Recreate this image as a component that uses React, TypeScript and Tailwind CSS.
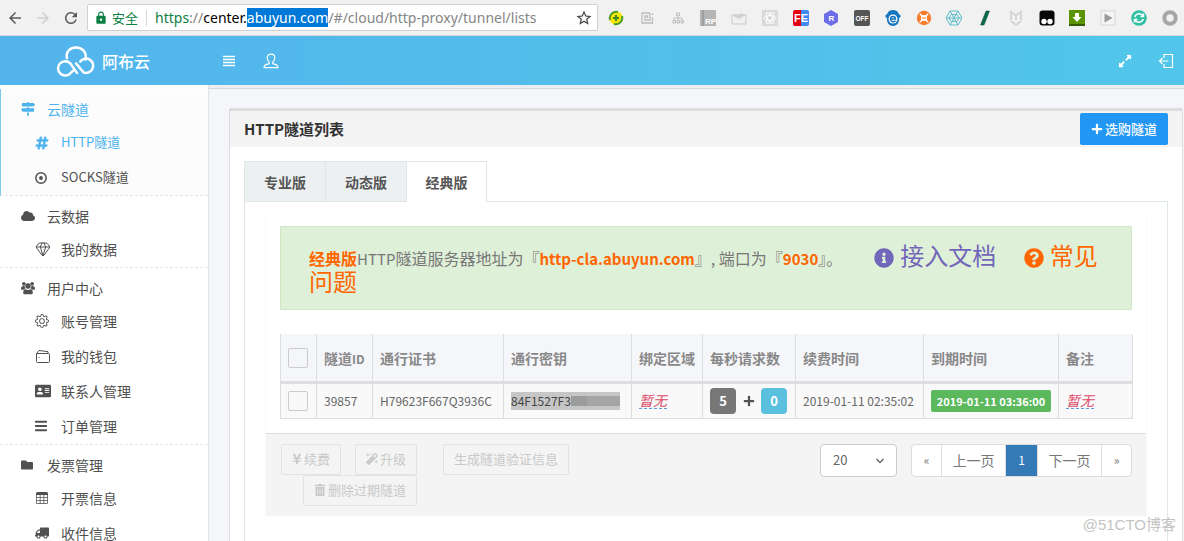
import React from 'react';
import {
  FaAddressCard,
  FaBars,
  FaCloud,
  FaExpandAlt,
  FaFolder,
  FaHashtag,
  FaInfoCircle,
  FaMagic,
  FaMapSigns,
  FaPlus,
  FaQuestionCircle,
  FaTrashAlt,
  FaTruck,
  FaYenSign } from
'react-icons/fa';
import { BsGear, BsTable } from 'react-icons/bs';
import { Gem } from 'lucide-react';
import {
  MdArrowBack,
  MdArrowForward,
  MdLock,
  MdRefresh,
  MdStarBorder } from
'react-icons/md';

const WalletIcon = ({ className }: {className?: string;}) =>
<svg viewBox="0 0 16 16" className={className} fill="none" stroke="currentColor">
    <path d="M1.500 5.500h12a1 1 0 0 1 1 1v7a1 1 0 0 1-1 1h-11a1 1 0 0 1-1-1z" />
    <path d="M1.500 5.500 4 2.500l9 1.200v1.800" />
    <path d="M3.500 9.500h1" />
  </svg>;

const UsersIcon = ({ className }: {className?: string;}) =>
<svg viewBox="0 0 16 16" className={className} fill="currentColor">
    <circle cx="3.300" cy="3.200" r="2.100" />
    <circle cx="12.700" cy="3.200" r="2.100" />
    <circle cx="8" cy="5.800" r="3.100" />
    <path d="M4.300 6C1.800 5.400 0 6.200 0 8.800c0 .8.600 1.200 1.400 1.200h2.100c.6-.8 1-1.200 1.700-1.300C4.500 7.900 4.200 7 4.300 6zM11.700 6c2.500-.6 4.300.2 4.300 2.800 0 .8-.6 1.200-1.400 1.200h-2.100c-.6-.8-1-1.200-1.700-1.300.7-.8 1-1.700.9-2.700z" />
    <path d="M5.300 9.300c1.700 1.200 3.700 1.200 5.400 0 2 0 2.800 1.900 2.800 4 0 1.200-.9 1.900-2 1.900h-7c-1.100 0-2-.7-2-1.900 0-2.100.8-4 2.800-4z" />
  </svg>;

const TargetIcon = ({ className }: {className?: string;}) =>
<svg viewBox="0 0 12 12" className={className}>
    <circle cx="6" cy="6" r="5.200" fill="none" stroke="currentColor" strokeWidth="1.500" />
    <circle cx="6" cy="6" r="1.900" fill="currentColor" />
  </svg>;

const ListIcon = () =>
<svg viewBox="0 0 12 12" className="h-3 w-3" stroke="currentColor" strokeWidth="1.700">
    <path d="M0 1.500h12M0 4.500h12M0 7.500h12M0 10.500h12" />
  </svg>;

const UserIcon = () =>
<svg viewBox="0 0 16 16" className="h-4 w-4" fill="none" stroke="currentColor" strokeWidth="1.200">
    <path d="M6.200 9.200C4.800 8 4.200 6.400 4.200 4.600 4.200 2.500 5.800 1.200 8 1.200s3.800 1.300 3.800 3.400c0 1.800-.6 3.400-2 4.600v1.400c1.800.7 3.800 1 4.600 2.100.3.500.5 1.200.5 1.900H1.100c0-.7.2-1.400.5-1.900.8-1.100 2.800-1.400 4.600-2.100z" />
  </svg>;

const LogoutIcon = () =>
<svg viewBox="0 0 16 16" className="h-4 w-4" fill="none" stroke="currentColor" strokeWidth="1.200">
    <path d="M6 5V1.500h8.500v13H6V11" />
    <path d="M10.500 8H1.500M4.500 5 1.500 8l3 3" />
  </svg>;

const LogoIcon = () =>
<svg viewBox="0 0 42 32" className="h-8 w-10" fill="none" stroke="white" strokeWidth="2.600" strokeLinecap="round">
    <path d="M11.500 13C10 6.500 14.500 1.800 21 1.800S32.500 6.500 31 14.500" />
    <path d="M22 28.500 15 18.500A7.500 7.500 0 1 0 15.500 28.500L18 26" />
    <path d="M21 18.500l8 9.500a7.500 7.500 0 1 0-3.500-11.500" />
  </svg>;

interface MenuItem {
  label: string;
  icon: React.ReactNode;
  active?: boolean;
  latin?: boolean;
}

const menu: {label: string;icon: React.ReactNode;active?: boolean;items: MenuItem[];}[] = [
{
  label: '云隧道',
  icon: <FaMapSigns className="h-3.5 w-3.5" />,
  active: true,
  items: [
  { label: 'HTTP隧道', icon: <FaHashtag className="h-3.5 w-3.5 stroke-current stroke-[24px]" />, active: true, latin: true },
  { label: 'SOCKS隧道', icon: <TargetIcon className="h-3 w-3" />, latin: true }]

},
{
  label: '云数据',
  icon: <FaCloud className="h-3.5 w-3.5" />,
  items: [{ label: '我的数据', icon: <Gem className="h-4 w-4" strokeWidth={1.5} /> }]
},
{
  label: '用户中心',
  icon: <UsersIcon className="h-3.5 w-3.5" />,
  items: [
  { label: '账号管理', icon: <BsGear className="h-3.5 w-3.5" /> },
  { label: '我的钱包', icon: <WalletIcon className="h-4 w-4" /> },
  { label: '联系人管理', icon: <FaAddressCard className="h-4 w-4" /> },
  { label: '订单管理', icon: <FaBars className="h-3.5 w-3" /> }]

},
{
  label: '发票管理',
  icon: <FaFolder className="h-3 w-3" />,
  items: [
  { label: '开票信息', icon: <BsTable className="h-3 w-3.5" /> },
  { label: '收件信息', icon: <FaTruck className="h-3.5 w-3.5 -scale-x-100" /> }]

}];


const extensions: React.ReactNode[] = [
<>
    <circle cx="8" cy="8" r="6.600" fill="#f3e600" />
    <path d="M2 10a6.500 6.500 0 0 1 8-8M14 6a6.500 6.500 0 0 1-8 8" fill="none" stroke="#4b9b2f" strokeWidth="2" />
    <path d="M8 5v6M5 8h6" stroke="#39862b" strokeWidth="2" />
  </>,
<path d="M11 3H3v10h8M11 3v7H6V6h2.500v2M13.500 3v2M13.500 7v6H11" fill="none" stroke="#bdbdbd" strokeWidth="1.300" />,
<path d="M6.500 3h3v2.500h-3zM8 5.500V8M4 10V8h8v2M3 10.500h2.500V13H3zM7 10.500h2.500V13H7zM11 10.500h2.500V13H11zM8 8v2" fill="none" stroke="#bdbdbd" />,
<>
    <path d="M0 0h16v16H0z" fill="#b5b5b5" />
    <path d="M3 0v16" stroke="#888" />
    <text x="5" y="14" fontSize="8" fontWeight="700" fill="white">RP</text>
  </>,
<>
    <path d="M1 5h14v9H1z" fill="#f0f0f0" stroke="#c9c9c9" />
    <path d="M1 5l7 4 7-4-3-1-2-1-3 2-2-1z" fill="#d2d2d2" />
  </>,
<>
    <path d="M0 0h16v16H0z" fill="#d9d9d9" />
    <g fill="none" stroke="white">
      <ellipse cx="8" cy="8" rx="6" ry="2.500" />
      <ellipse cx="8" cy="8" rx="6" ry="2.500" transform="rotate(60 8 8)" />
      <ellipse cx="8" cy="8" rx="6" ry="2.500" transform="rotate(120 8 8)" />
    </g>
  </>,
<>
    <path d="M2 0h6v16H2a2 2 0 0 1-2-2V2a2 2 0 0 1 2-2z" fill="#e60012" />
    <path d="M8 0h6a2 2 0 0 1 2 2v12a2 2 0 0 1-2 2H8z" fill="#3f88f2" />
    <text x="1" y="12" fontSize="11" fontWeight="700" fill="white">FE</text>
  </>,
<>
    <path d="M8 0l7 4v8l-7 4-7-4V4z" fill="#6c6ee8" />
    <text x="5.500" y="11" fontSize="8" fontWeight="700" fill="white">R</text>
  </>,
<>
    <rect width="16" height="16" rx="2" fill="#555" />
    <text x="1.500" y="10.500" fontSize="6.500" fontWeight="700" fill="white">OFF</text>
  </>,
<>
    <path d="M8 0c3 0 5 1.500 5.500 3.500L16 6l-2 2.500C14.500 13 11.500 16 8 16S1.500 13 2 8.500L0 6l2.500-2.500C3 1.500 5 0 8 0z" fill="#1675bd" />
    <circle cx="8" cy="9" r="4.500" fill="white" />
    <path d="M5.500 9h5c0-3.500-5-3.500-5 0 0 3 3.500 3.500 5 1.700" fill="none" stroke="#1675bd" strokeWidth="1.500" />
  </>,
<>
    <circle cx="8" cy="8" r="7.200" fill="#f47b2a" />
    <path d="M3.800 3.800l8.400 8.400M12.200 3.800l-8.400 8.400" stroke="white" strokeWidth="1.500" />
    <circle cx="8" cy="8" r="3" fill="white" />
    <path d="M6 8h4" stroke="#f47b2a" />
  </>,
<path d="M4 1h8l4 7-4 7H4L0 8zM4 1l8 14M12 1L4 15M0 8h16M5 4.500h6L13 8l-2 3.500H5L3 8z" fill="none" stroke="#5fbcc8" />,
<path d="M9 1h3.500L7 15H3.500z" fill="#0c6b45" stroke="#0a4a33" strokeWidth=".5" />,
<path d="M3 10V2l5 3.500L13 2v8M3 11l5 4 5-4M8 5.500V10" fill="none" stroke="#d5d5d5" strokeWidth="2" />,
<>
    <rect x=".5" y=".5" width="15" height="15" rx="3" fill="#080808" />
    <circle cx="5" cy="11.500" r="2.700" fill="white" />
    <circle cx="11" cy="11.500" r="2.700" fill="white" />
  </>,
<>
    <path d="M0 0h16v16H0z" fill="#5b9400" />
    <path d="M0 14h16v2H0z" fill="#355c00" />
    <path d="M6 3h4v4h2.500L8 12 3.500 7H6z" fill="white" />
  </>,
<>
    <rect x="1" y="1" width="14" height="14" fill="#f5f5f5" stroke="#d5d5d5" />
    <path d="M4.500 3.500v9l8-4.500z" fill="#9a9a9a" />
  </>,
<>
    <circle cx="8" cy="8" r="7.800" fill="#2fbfa3" />
    <path d="M3.800 7A4.500 4.500 0 0 1 12 6M12.200 9A4.500 4.500 0 0 1 4 10M12.500 3.500V6.500h-3M3.500 12.500v-3h3" fill="none" stroke="white" strokeWidth="1.500" />
  </>,
<circle cx="8" cy="8" r="5.700" fill="none" stroke="#a6a6a6" strokeWidth="4" />];


function BrowserBar() {
  return (
    <div className="flex h-9 shrink-0 items-center border-b border-gray-300 bg-[#f1f1f1] px-1.5">
      <div className="flex w-[81px] shrink-0 items-center gap-2.5 text-[#5a5a5a]">
        <MdArrowBack className="h-4.5 w-4.5" />
        <MdArrowForward className="h-4.5 w-4.5 text-[#cfcfcf]" />
        <MdRefresh className="h-4.5 w-4.5" />
      </div>
      <div className="flex h-[27px] w-[511px] shrink-0 items-center rounded-xs border border-[#d0d0d0] bg-white px-1 font-['Noto_Sans','Noto_Sans_CJK_SC',sans-serif] text-[13px] text-[#858585]">
        <MdLock className="mr-1 ml-0.5 h-3.5 w-3.5 text-[#0b8043]" />
        <span className="border-r border-gray-300 pr-2 leading-4 text-[#0b8043]">安全</span>
        <span className="ml-2 grow text-sm whitespace-nowrap">
          <span className="text-[#0b8043]">https</span>://<span className="text-black">center.</span>
          <span className="bg-[#0078d7] text-white">abuyun.com</span>/#/cloud/http-proxy/tunnel/lists
        </span>
        <MdStarBorder className="h-4.5 w-4.5 text-[#444]" />
      </div>
      <div className="ml-2.5 flex grow items-center justify-between">
        {extensions.map((icon, i) =>
        <svg key={i} viewBox="0 0 16 16" className="h-4 w-4 font-['Liberation_Sans',sans-serif]">
            {icon}
          </svg>
        )}
      </div>
    </div>);

}

function Header() {
  return (
    <header className="flex h-[49px] shrink-0 items-center bg-linear-to-r from-[#53b4ec] to-[#51c6ea] text-white">
      <div className="flex w-[209px] shrink-0 items-center gap-1.5 pl-14">
        <LogoIcon />
        <span className="text-base font-medium">阿布云</span>
      </div>
      <button aria-label="菜单" className="ml-3.5">
        <ListIcon />
      </button>
      <button aria-label="用户" className="ml-7">
        <UserIcon />
      </button>
      <button aria-label="全屏" className="mr-6.5 ml-auto">
        <FaExpandAlt className="h-3.5 w-3.5" />
      </button>
      <button aria-label="退出" className="mr-2.5">
        <LogoutIcon />
      </button>
    </header>);

}

function Sidebar() {
  return (
    <nav className="w-[209px] shrink-0 overflow-hidden border-r border-[#dfe3e8] bg-white pt-1">
      {menu.map((group) =>
      <div
        key={group.label}
        className={
        group.active ?
        'border-b border-l border-dashed border-b-[#e4e4e4] border-l-[#7cc8f0] bg-[#fcfcfc] [border-left-style:solid]' :
        'border-b border-l border-dashed border-b-[#e4e4e4] border-l-transparent'
        }>

          <a
          href="#"
          className={`flex h-9 items-center pt-1 pl-5 ${group.active ? 'text-[#4db3ee]' : 'text-[#505050]'}`}>

            <span className="flex w-[26px] items-center">{group.icon}</span>
            {group.label}
          </a>
          {group.items.map((item) =>
        <a
          key={item.label}
          href="#"
          className={`flex h-[35px] items-center pl-8.5 ${item.active ? 'text-[#4db3ee]' : 'text-[#505050]'} ${item.latin ? 'text-[13px]' : 'pb-0.5'}`}>

              <span className="flex w-[26px] items-center">{item.icon}</span>
              {item.label}
            </a>
        )}
        </div>
      )}
    </nav>);

}

const thClass = 'border-x border-b-3 border-[#ddd] px-[7px] text-left font-bold whitespace-nowrap';
const tdClass = 'border border-[#ddd] px-[7px] whitespace-nowrap';
const checkboxClass = 'block h-5 w-5 appearance-none rounded-xs border border-[#ccc] bg-transparent';
const editableClass = 'inline-block border-b border-dashed border-[#5c9fdc] text-sm leading-4 text-[#dd4b68] italic';
const disabledClass = 'flex h-[31px] items-center gap-0.5 rounded-xs border border-[#e2e2e2] px-2.5 text-[13px] whitespace-nowrap text-[#c9c9c9]';

function TunnelTable() {
  return (
    <table className="w-full table-fixed border-collapse text-[#666]">
      <colgroup>
        <col className="w-[36px]" />
        <col className="w-[56px]" />
        <col className="w-[131px]" />
        <col className="w-[128px]" />
        <col className="w-[71px]" />
        <col className="w-[93px]" />
        <col className="w-[128px]" />
        <col className="w-[135px]" />
        <col className="w-[74px]" />
      </colgroup>
      <thead>
        <tr className="h-12 bg-[#f5f6fa] text-sm text-[#888]">
          <th className={thClass}>
            <input type="checkbox" aria-label="全选" className={checkboxClass} />
          </th>
          <th className={thClass}>隧道<span className="text-xs">ID</span></th>
          <th className={thClass}>通行证书</th>
          <th className={thClass}>通行密钥</th>
          <th className={thClass}>绑定区域</th>
          <th className={thClass}>每秒请求数</th>
          <th className={thClass}>续费时间</th>
          <th className={thClass}>到期时间</th>
          <th className={thClass}>备注</th>
        </tr>
      </thead>
      <tbody>
        <tr className="h-9 bg-[#f9f9f9] text-xs">
          <td className={tdClass}>
            <input type="checkbox" aria-label="选择 39857" className={checkboxClass} />
          </td>
          <td className={tdClass}>39857</td>
          <td className={tdClass}>H79623F667Q3936C</td>
          <td className={tdClass}>
            <div className="flex h-4.5 w-[109px] items-center bg-[#c6c6c6] text-[#444]">
              <span>84F1527F3</span>
              <span className="h-2.5 w-4 bg-[#9c9c9c]" />
              <span className="h-2.5 grow bg-[#a5a5a5]" />
            </div>
          </td>
          <td className={tdClass}>
            <a href="#" className={editableClass}>暂无</a>
          </td>
          <td className={tdClass}>
            <div className="flex items-center justify-between pr-px text-[13px] font-bold text-white">
              <span className="flex h-[26px] w-[26px] items-center justify-center rounded-sm bg-[#777]">5</span>
              <FaPlus className="h-3 w-3 text-[#555]" />
              <span className="flex h-[26px] w-[26px] items-center justify-center rounded-sm bg-[#5bc0de]">0</span>
            </div>
          </td>
          <td className={tdClass}>2019-01-11 02:35:02</td>
          <td className={tdClass}>
            <span className="flex h-[22px] items-center justify-center rounded-xs bg-[#5cb85c] text-[11px] font-bold text-white">
              2019-01-11 03:36:00
            </span>
          </td>
          <td className={tdClass}>
            <a href="#" className={editableClass}>暂无</a>
          </td>
        </tr>
      </tbody>
    </table>);

}

function TableFooter() {
  return (
    <div className="flex items-start border-t border-[#ddd] bg-[#f4f4f4] px-3.5 py-2.5">
      <div className="flex w-[137px] flex-wrap justify-end gap-x-3.5">
        <button disabled className={disabledClass}><FaYenSign className="h-3 w-2.5" />续费</button>
        <button disabled className={disabledClass}><FaMagic className="h-3 w-3" />升级</button>
        <button disabled className={disabledClass}><FaTrashAlt className="h-3 w-3" />删除过期隧道</button>
      </div>
      <button disabled className={`ml-6.5 ${disabledClass}`}>生成隧道验证信息</button>
      <div className="relative mr-3.5 ml-auto">
        <select
          aria-label="每页条数"
          defaultValue="20"
          className="h-[33px] w-[77px] appearance-none rounded-sm border border-[#ccc] bg-white pl-3 text-[13px] text-[#666]">

          <option>20</option>
          <option>50</option>
        </select>
        <svg viewBox="0 0 10 10" className="pointer-events-none absolute top-3 right-3 h-2.5 w-2.5" fill="none" stroke="#666" strokeWidth="1.500">
          <path d="M1.500 3 5 6.500 8.500 3" />
        </svg>
      </div>
      <div className="flex h-[33px] divide-x divide-[#ddd] overflow-hidden rounded-sm border border-[#ddd] bg-white text-sm text-[#777]">
        <button className="w-[30px] text-xs">«</button>
        <button className="w-[64px]">上一页</button>
        <button className="w-8 bg-[#337ab7] text-xs text-white">1</button>
        <button className="w-[64px]">下一页</button>
        <button className="w-[29px] text-xs">»</button>
      </div>
    </div>);

}

export default function App() {
  const tabs = ['专业版', '动态版', '经典版'];
  return (
    <div className="relative flex h-screen flex-col overflow-hidden bg-[#f5f6fa] font-['Noto_Sans_CJK_SC',sans-serif] text-sm">
      <BrowserBar />
      <Header />
      <div className="flex min-h-0 grow">
        <Sidebar />
        <main className="flex min-w-0 grow flex-col">
          <div className="h-1 shrink-0 border-b border-[#d5d8dd] bg-[#eceef2]" />
          <section className="mt-[19px] mr-px ml-5 grow rounded-t-xs border-x border-t-3 border-[#ddd] bg-white">
            <div className="flex h-9 items-center justify-between bg-[#f4f4f4] px-3.5">
              <h3 className="text-[15px] font-bold text-[#333]">HTTP隧道列表</h3>
              <button className="flex h-8 items-center gap-0.5 rounded-xs bg-[#2196f3] px-[11px] text-[13px] font-medium text-white">
                <FaPlus className="h-3 w-3" />
                选购隧道
              </button>
            </div>
            <div className="px-3.5 pt-3.5">
              <div className="flex font-bold text-[#555]" role="tablist">
                {tabs.map((tab) =>
                <button
                  key={tab}
                  role="tab"
                  className={
                  tab === '经典版' ?
                  'z-10 -mb-px h-[41px] w-[81px] border border-b-0 border-[#dfe6e8] bg-white' :
                  'h-10 w-[81px] border border-r-0 border-b-0 border-[#dfe6e8] bg-[#ecf0f1]'
                  }>

                    {tab}
                  </button>
                )}
              </div>
              <div className="h-[500px] border border-[#dfe6e8] px-5 pt-3.5">
                <div className="border-x border-[#fafafa] pt-2.5">
                  <div className="mx-3.5 border border-[#d2e7c4] bg-[#dff0d8] px-7 py-[15px] text-base leading-[19px] text-[#777]">
                    <b className="text-[#ff6600]">经典版</b><span className="text-[15px]">HTTP</span>隧道服务器地址为『<b className="text-[15px] text-[#ff6600]">http-cla.abuyun.com</b>』, 端口为『<b className="text-[15px] text-[#ff6600]">9030</b>』。
                    <a href="#" className="ml-8 text-2xl leading-[25px] whitespace-nowrap text-[#7266ba]">
                      <FaInfoCircle className="mr-1.5 inline h-5 w-5" />接入文档
                    </a>{' '}
                    <a href="#" className="ml-6 text-2xl leading-[25px] text-[#ff6600]">
                      <FaQuestionCircle className="mr-1.5 inline h-5 w-5" />常见问题
                    </a>
                  </div>
                  <div className="mx-3.5 mt-6 mb-3.5">
                    <TunnelTable />
                  </div>
                  <TableFooter />
                </div>
              </div>
            </div>
          </section>
        </main>
      </div>
      <div className="pointer-events-none absolute right-2 bottom-1.5 font-['Liberation_Sans','Noto_Sans_CJK_SC',sans-serif] text-[15px] text-[#c4c4c4]">
        @51CTO博客
      </div>
    </div>);

}
